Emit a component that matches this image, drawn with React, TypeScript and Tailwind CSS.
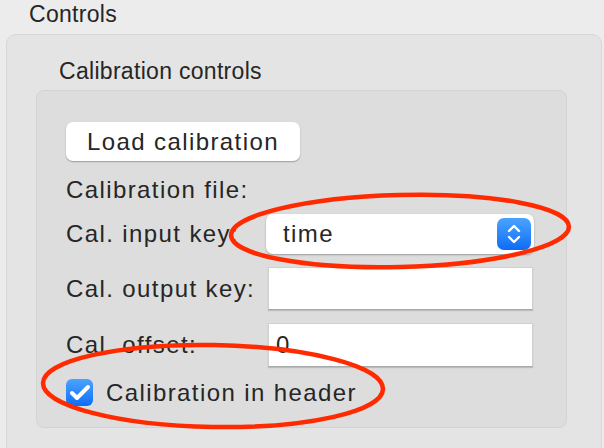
import { Check } from "lucide-react";

const font = { fontFamily: "'Liberation Sans', Arial, sans-serif" };

function Stepper() {
  return (
    <div className="w-[34px] h-[32px] rounded-[7px] bg-gradient-to-b from-[#4aa3ff] to-[#0a6cf5] flex items-center justify-center">
      <svg width="16" height="22" viewBox="0 0 16 22" fill="none" stroke="white" strokeWidth="2.4" strokeLinecap="round" strokeLinejoin="round">
        <path d="M3 8 L8 3 L13 8" />
        <path d="M3 14 L8 19 L13 14" />
      </svg>
    </div>
  );
}

export default function App() {
  return (
    <div className="relative w-[604px] h-[448px] overflow-hidden bg-[#ebeceb] text-[#262626] text-[23px] leading-none" style={font}>
      <div className="pl-[29px] pt-[3px] h-[34px] tracking-[0.3px]">Controls</div>

      {/* outer group box */}
      <div className="ml-[6px] mr-[2px] h-[430px] rounded-[10px] border border-[#d6d7d6] bg-[#e3e4e3]">
        <div className="pl-[52px] pt-[25px] h-[55px] tracking-[0.3px]">Calibration controls</div>

        {/* inner box */}
        <div className="ml-[29px] mr-[34px] h-[338px] rounded-[8px] border border-[#d2d3d2] bg-[#dcdddc] pl-[29px] pt-[31px] text-[24px] tracking-[1.4px]">
          <button className="w-[234px] h-[39px] rounded-[7px] bg-white shadow-[0_1px_1.5px_rgba(0,0,0,0.3)] text-[24px] tracking-[1.4px]" style={font}>
            Load calibration
          </button>

          <div className="h-[40px] flex items-center mt-[9px]">Calibration file:</div>

          <div className="grid grid-cols-[200px_268px] gap-y-[13px] items-center mt-[4px]">
            <div>Cal. input key:</div>
            <div className="h-[40px] rounded-[7px] bg-white shadow-[0_1px_2px_rgba(0,0,0,0.3)] flex items-center justify-between pl-[17px] pr-[3px]">
              <span>time</span>
              <Stepper />
            </div>

            <div>Cal. output key:</div>
            <div className="ml-[2px] mr-[1px] h-[43px] bg-white border border-[#d0d0d0] border-b-[#a9a9a9] shadow-[0_1px_1px_rgba(0,0,0,0.15)]"></div>

            <div>Cal. offset:</div>
            <div className="ml-[2px] mr-[1px] h-[44px] bg-white border border-[#d0d0d0] border-b-[#a9a9a9] shadow-[0_1px_1px_rgba(0,0,0,0.15)] flex items-center pl-[7px]">0</div>
          </div>

          <div className="flex items-center gap-[13px] mt-[12px]">
            <div className="w-[27px] h-[27px] rounded-[6px] bg-gradient-to-b from-[#4aa3ff] to-[#0a6cf5] flex items-center justify-center">
              <Check className="w-[24px] h-[24px] text-white" strokeWidth={4} />
            </div>
            <span>Calibration in header</span>
          </div>
        </div>
      </div>

      {/* red annotation ellipses */}
      <svg className="absolute inset-0 pointer-events-none" width="604" height="448">
        <ellipse cx="400" cy="231" rx="169" ry="36" fill="none" stroke="#ff2a00" strokeWidth="4.5" transform="rotate(-1.5 400 231)" />
        <ellipse cx="213" cy="386" rx="170" ry="41" fill="none" stroke="#ff2a00" strokeWidth="4.5" transform="rotate(1 213 386)" />
      </svg>
    </div>
  );
}
